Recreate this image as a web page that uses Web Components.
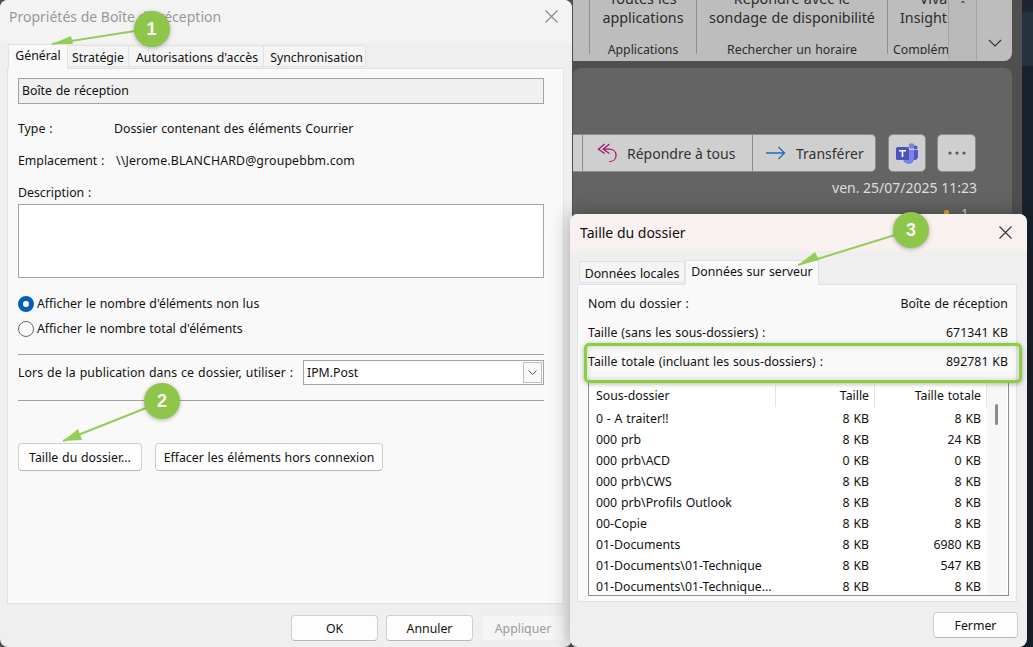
<!DOCTYPE html>
<html lang="fr">
<head>
<meta charset="utf-8">
<title>Propriétés de Boîte de réception</title>
<style>
  html, body { margin: 0; height: 100%; overflow: hidden; background: #4f4f4f; }
  body { font: 12.3px "Noto Sans", "Open Sans", sans-serif; word-spacing: .6px; color: #111; }
</style>
</head>
<body>
<desk-top>
  <mail-backdrop></mail-backdrop>

  <props-dialog></props-dialog>
  <size-dialog></size-dialog>

  <high-light></high-light>
  <call-out n="1" cx="151.500" cy="29" r="18" from="135,31" tip="52,44" h1="71,36" h2="73,44"></call-out>
  <call-out n="2" cx="162" cy="401" r="18" from="146,408" tip="63,441" h1="78,429" h2="82,440"></call-out>
  <call-out n="3" cx="911" cy="230" r="18" from="895,235" tip="798,265" h1="815,252" h2="819,260"></call-out>
</desk-top>

<script>
const FONT = '"Noto Sans", "Open Sans", sans-serif';

class DeskTop extends HTMLElement {
  constructor() {
    super();
    this.attachShadow({ mode: 'open' }).innerHTML = `
      <style>
        :host { display: block; position: relative; width: 1033px; height: 647px; overflow: hidden; background: #4f4f4f; }
      </style>
      <slot></slot>`;
  }
}

class WinButton extends HTMLElement {
  constructor() {
    super();
    this.attachShadow({ mode: 'open' }).innerHTML = `
      <style>
        :host { display: flex; align-items: center; justify-content: center; box-sizing: border-box; height: 26px; flex: none;
          background: #fdfdfd; border: 1px solid #cfcfcf; border-bottom-color: #b8b8b8; border-radius: 4px; color: #111; white-space: nowrap; }
        :host([disabled]) { background: #f5f5f5; border-color: #ededed; color: #9b9b9b; }
      </style>
      <slot></slot>`;
  }
}

class WinTab extends HTMLElement {
  constructor() {
    super();
    this.attachShadow({ mode: 'open' }).innerHTML = `
      <style>
        :host { display: flex; align-items: center; justify-content: center; box-sizing: border-box; height: 22px; padding-top: 2px;
          background: #f4f4f4; border: 1px solid #e2e2e2; border-left: 0; white-space: nowrap; margin-bottom: 1px; }
        :host([active]) { height: 25px; padding-top: 0; padding-bottom: 3px; background: #f9f9f9; border-left: 1px solid #e2e2e2; border-bottom: 0; position: relative; z-index: 1; margin-bottom: -1px; }
      </style>
      <slot></slot>`;
  }
}

class CloseCross extends HTMLElement {
  constructor() {
    super();
    const c = this.getAttribute('color') || '#333';
    this.attachShadow({ mode: 'open' }).innerHTML = `
      <style>:host { display: block; width: 13px; height: 13px; } svg { display: block; }</style>
      <svg width="13" height="13" viewBox="0 0 13 13" fill="none" stroke="${c}" stroke-width="1.1"><path d="M.5.5l12 12M12.500.5l-12 12"/></svg>`;
  }
}

class RibbonGroup extends HTMLElement {
  constructor() {
    super();
    const w = this.getAttribute('w');
    const label = this.getAttribute('label');
    this.attachShadow({ mode: 'open' }).innerHTML = `
      <style>
        :host { display: flex; flex-direction: column; justify-content: flex-end; align-items: center; box-sizing: border-box;
          width: ${w}px; height: 54px; border-right: 1px solid #8f8f8f; line-height: 19px; flex: none; }
        .big { font-size: 14.300px; text-align: center; white-space: nowrap; color: #2c2c2c; }
        .lab { margin-top: 16px; margin-bottom: -3px; height: 14px; line-height: 14px; font-size: 12.300px; color: #2c2c2c; white-space: nowrap; }
      </style>
      <div class="big"><slot></slot></div>
      <div class="lab">${label}</div>`;
  }
}

class MailButton extends HTMLElement {
  constructor() {
    super();
    this.attachShadow({ mode: 'open' }).innerHTML = `
      <style>
        :host { display: flex; align-items: center; height: 100%; box-sizing: border-box; font-size: 14px; word-spacing: 0; color: #333; white-space: nowrap; flex: none; }
      </style>
      <slot></slot>`;
  }
}

class MailBackdrop extends HTMLElement {
  constructor() {
    super();
    this.attachShadow({ mode: 'open' }).innerHTML = `
      <style>
        :host { position: absolute; inset: 0; display: flex; flex-direction: column; padding-left: 573px; padding-right: 21px; box-sizing: border-box; background: #4f4f4f; }
        :host::after { content: ''; position: absolute; right: 0; top: 0; bottom: 0; width: 11px;
          background: linear-gradient(#1e2530 0 12px, #27323f 12px 66px, #18212c 66px); }
        .ribbon { position: relative; height: 61px; display: flex; background: #bdbdbd; border-radius: 0 0 8px 0; overflow: hidden; flex: none; }
        .over { position: relative; width: 29px; border: solid #a5a5a5; border-width: 0 1px; background: #b9b9b9; flex: none; box-sizing: border-box; height: 60px; }
        .over svg { position: absolute; left: 12px; top: 0; }
        .chev { flex: 1; display: flex; align-items: flex-end; justify-content: center; padding-bottom: 14px; }
        .panel { margin-top: 7px; flex: 1; background: #646464; border-radius: 8px 8px 0 0; display: flex; flex-direction: column; padding: 66px 35px 0 0; color: #ddd; word-spacing: 0; }
        .bar { display: flex; height: 38px; }
        .joined { display: flex; width: 303px; background: #cfcfcf; border-radius: 0 5px 5px 0; border: 1px solid #8c8c8c; border-left: 0; box-sizing: border-box; margin-right: 12px; flex: none; }
        .stub { width: 9px; border-right: 1px solid #8c8c8c; }
        .b1 { width: 170px; padding-left: 14px; gap: 9px; border-right: 1px solid #8c8c8c; }
        .b2 { padding-left: 13px; gap: 10px; }
        .square { width: 38px; height: 38px; box-sizing: border-box; background: #cfcfcf; border: 1px solid #8c8c8c; border-radius: 5px; display: flex; align-items: center; justify-content: center; flex: none; }
        .date { text-align: right; margin-top: 6px; font-size: 14px; line-height: 19px; white-space: nowrap; }
        .like { align-self: flex-end; margin-top: 9px; margin-right: 9px; font-size: 12px; line-height: 16px; display: flex; gap: 12px; align-items: flex-start; }
        .thumb-up { width: 5px; height: 6px; margin-top: 4px; background: #e0a72a; border-radius: 2px 2px 0 0; }
        svg { display: block; }
      </style>
      <div class="ribbon">
        <ribbon-group w="17" label="">&nbsp;</ribbon-group>
        <ribbon-group w="107" label="Applications">Toutes les<br>applications</ribbon-group>
        <ribbon-group w="191" label="Rechercher un horaire">Répondre avec le<br>sondage de disponibilité</ribbon-group>
        <ribbon-group style="width:60px;border:0;align-items:flex-start;padding-left:5px;overflow:hidden" w="60" label="Complém">
          <span style="margin-left:20px">Viva</span><br><span style="margin-left:7px">Insights</span>
        </ribbon-group>
        <div class="over"><svg width="4" height="3" viewBox="0 0 4 3" fill="none" stroke="#333"><path d="M.5 3L2 1l1.500 2"/></svg></div>
        <div class="chev"><svg width="14" height="8" viewBox="0 0 14 8" fill="none" stroke="#333" stroke-width="1.1"><path d="M1 1l6 6 6-6"/></svg></div>
      </div>
      <div class="panel">
        <div class="bar">
          <div class="joined">
            <div class="stub"></div>
            <mail-button class="b1">
              <svg width="21" height="20" viewBox="0 0 22 21" fill="none" stroke="#a2156e" stroke-width="1.3"><path d="M8 1L1.500 6.500 8 11M13 1L6.500 6.500 13 11"/><path d="M6.500 6.500H13c4 0 7 2.500 7 6.500s-3 6.500-7 6.500"/></svg>
              <span>Répondre à tous</span>
            </mail-button>
            <mail-button class="b2">
              <svg width="20" height="14" viewBox="0 0 20 14" fill="none" stroke="#1f6fb4" stroke-width="1.3"><path d="M0 7h18.500M12.500 1l6 6-6 6"/></svg>
              <span>Transférer</span>
            </mail-button>
          </div>
          <div class="square">
            <svg width="22" height="22" viewBox="0 0 22 22"><circle cx="15.500" cy="4" r="2.800" fill="#7b83eb"/><circle cx="19.500" cy="5.500" r="2" fill="#5059c9"/><path d="M16 8h6v7a3.500 3.500 0 0 1-6 2z" fill="#5059c9"/><path d="M7 8h11v9a5 5 0 0 1-5.500 5A5.500 5.500 0 0 1 7 17z" fill="#7b83eb"/><rect x="0" y="5" width="13" height="13" rx="1.500" fill="#4b53bc"/><path d="M3 8h7v1.500H7.300V15H5.700V9.500H3z" fill="#fff"/></svg>
          </div>
          <div class="square" style="margin-left:11px;width:39px">
            <svg width="18" height="4" viewBox="0 0 18 4" fill="#555"><circle cx="2" cy="2" r="1.600"/><circle cx="9" cy="2" r="1.600"/><circle cx="16" cy="2" r="1.600"/></svg>
          </div>
        </div>
        <div class="date">ven. 25/07/2025 11:23</div>
        <div class="like"><span class="thumb-up"></span><span>1</span></div>
      </div>`;
  }
}

class PropsDialog extends HTMLElement {
  constructor() {
    super();
    this.attachShadow({ mode: 'open' }).innerHTML = `
      <style>
        :host { position: absolute; left: 0; top: 0; width: 572px; height: 647px; box-sizing: border-box; background: #efefef; border-radius: 8px;
          display: flex; flex-direction: column; font: 12.3px ${FONT}; word-spacing: .6px; color: #111; overflow: hidden; }
        .title { height: 43px; flex: none; display: flex; align-items: flex-start; justify-content: space-between; padding: 6px 14px 0 9px; box-sizing: border-box; background: #f3f3f3; font-size: 14px; word-spacing: 0; line-height: 21px; color: #999; }
        .title close-cross { margin-top: 4px; }
        .tabs { display: flex; align-items: flex-end; height: 25px; padding-left: 8px; flex: none; }
        .pane { box-sizing: border-box; width: 557px; height: 536px; margin-left: 7px; background: #f9f9f9; border: 1px solid #e2e2e2; padding: 9px 19px 0 10px; flex: none; }
        .field { height: 26px; box-sizing: border-box; background: #f0f0f0; border: 1px solid #a3a3a3; display: flex; align-items: center; padding: 0 0 1px 3px; margin-bottom: 8px; }
        .info { display: flex; align-items: center; height: 32px; }
        .info b { font-weight: 400; width: 96px; flex: none; }
        .desc { margin-top: 9px; height: 16px; line-height: 16px; margin-bottom: 3px; }
        .area { height: 74px; box-sizing: border-box; background: #fff; border: 1px solid #a3a3a3; margin-bottom: 13px; }
        .radio { display: flex; align-items: center; gap: 3px; height: 25px; }
        .dot { width: 16px; height: 16px; border-radius: 50%; box-sizing: border-box; border: 1px solid #6b6b6b; background: #fafafa; flex: none; }
        .dot.on { border: 5px solid #0560b2; background: #fff; }
        hr { border: 0; border-top: 1px solid #a0a0a0; margin: 0; }
        .post { display: flex; align-items: center; justify-content: space-between; margin: 5px 0 15px; height: 25px; }
        .select { box-sizing: border-box; width: 241px; height: 25px; background: #fff; border: 1px solid #a3a3a3; display: flex; align-items: center; justify-content: space-between; padding: 1px 1px 1px 3px; }
        .drop { width: 19px; height: 21px; box-sizing: border-box; border: 1px solid #bdbdbd; background: #f8f8f8; display: flex; align-items: center; justify-content: center; }
        .acts { display: flex; gap: 13px; margin-top: 42px; }
        .foot { display: flex; justify-content: flex-end; gap: 8px; margin-top: 11px; padding-right: 7px; }
      </style>
      <div class="title"><span>Propriétés de Boîte de réception</span><close-cross color="#888"></close-cross></div>
      <div class="tabs">
        <win-tab active style="width:60px">Général</win-tab>
        <win-tab style="width:61px">Stratégie</win-tab>
        <win-tab style="width:135px;padding-left:2px">Autorisations d'accès</win-tab>
        <win-tab style="width:102px;padding-left:4px">Synchronisation</win-tab>
      </div>
      <div class="pane">
        <div class="field">Boîte de réception</div>
        <div class="info"><b>Type :</b><span>Dossier contenant des éléments Courrier</span></div>
        <div class="info"><b>Emplacement :</b><span style="margin-left:2px;letter-spacing:.15px">\\\\Jerome.BLANCHARD@groupebbm.com</span></div>
        <div class="desc">Description :</div>
        <div class="area"></div>
        <div class="radio"><span class="dot on"></span>Afficher le nombre d'éléments non lus</div>
        <div class="radio"><span class="dot"></span>Afficher le nombre total d'éléments</div>
        <hr style="margin-top:13px">
        <div class="post">
          <span style="letter-spacing:.08px">Lors de la publication dans ce dossier, utiliser :</span>
          <div class="select"><span>IPM.Post</span><span class="drop"><svg width="9" height="5" viewBox="0 0 9 5" fill="none" stroke="#555"><path d="M.5.500l4 4 4-4"/></svg></span></div>
        </div>
        <hr>
        <div class="acts">
          <win-button style="width:124px;height:28px">Taille du dossier...</win-button>
          <win-button style="width:228px;height:28px">Effacer les éléments hors connexion</win-button>
        </div>
      </div>
      <div class="foot">
        <win-button style="width:87px">OK</win-button>
        <win-button style="width:87px">Annuler</win-button>
        <win-button disabled style="width:84px">Appliquer</win-button>
      </div>`;
  }
}

class SizeDialog extends HTMLElement {
  constructor() {
    super();
    const rows = [
      ['0 - A traiter!!', '8 KB', '8 KB'],
      ['000 prb', '8 KB', '24 KB'],
      ['000 prb\\ACD', '0 KB', '0 KB'],
      ['000 prb\\CWS', '8 KB', '8 KB'],
      ['000 prb\\Profils Outlook', '8 KB', '8 KB'],
      ['00-Copie', '8 KB', '8 KB'],
      ['01-Documents', '8 KB', '6980 KB'],
      ['01-Documents\\01-Technique', '8 KB', '547 KB'],
      ['01-Documents\\01-Technique...', '8 KB', '8 KB'],
    ];
    const body = rows.map(r => `<div class="row"><span>${r[0]}</span><span class="num">${r[1]}</span><span class="num">${r[2]}</span></div>`).join('');
    this.attachShadow({ mode: 'open' }).innerHTML = `
      <style>
        :host { position: absolute; left: 570px; top: 214px; width: 457px; height: 433px; box-sizing: border-box; background: #efefef; border-radius: 8px;
          display: flex; flex-direction: column; font: 12.3px ${FONT}; word-spacing: .6px; color: #111; box-shadow: 0 0 20px rgba(0,0,0,.32); }
        .title { height: 37px; flex: none; box-sizing: border-box; display: flex; align-items: center; justify-content: space-between; padding: 0 15px 0 10px; background: #f9f0f0; border-radius: 8px 8px 0 0; font-size: 14px; word-spacing: 0; }
        .tabs { display: flex; align-items: flex-end; height: 33px; padding-left: 9px; flex: none; box-sizing: border-box; }
        .tabs win-tab:first-child { border-left: 1px solid #e2e2e2; }
        .pane { box-sizing: border-box; width: 440px; height: 318px; margin-left: 7px; background: #f9f9f9; border: 1px solid #e2e2e2; padding: 4px 8px 0 10px; flex: none; }
        .line { display: flex; justify-content: space-between; align-items: center; height: 29px; letter-spacing: .04px; }
        .list { margin-top: 4px; margin-right: -1px; box-sizing: border-box; height: 216px; background: #fff; border: 1px solid #8b8d99; padding-top: 4px; position: relative; overflow: hidden; }
        .head, .row { display: grid; grid-template-columns: 179px 99px 113px; align-items: center; padding-left: 7px; white-space: nowrap; }
        .head { height: 23px; align-items: start; }
        .row { height: 21px; }
        .head span { box-sizing: border-box; height: 22px; line-height: 21px; }
        .head span + span { border-left: 1px solid #e4e4e4; }
        .head span:last-child { border-right: 1px solid #e4e4e4; }
        .num { text-align: right; padding-right: 5px; }
        .row .num:last-child { padding-right: 6px; }
        .track { position: absolute; right: 1px; top: 0; bottom: 0; width: 20px; background: #f7f7f7; }
        .thumb { position: absolute; left: 8px; top: 23px; width: 3px; height: 21px; background: #8b8b8b; border-radius: 2px; }
        .foot { display: flex; justify-content: flex-end; margin-top: 10px; padding-right: 9px; }
      </style>
      <div class="title"><span>Taille du dossier</span><close-cross></close-cross></div>
      <div class="tabs">
        <win-tab style="width:106px">Données locales</win-tab>
        <win-tab active style="width:134px">Données sur serveur</win-tab>
      </div>
      <div class="pane">
        <div class="line"><span>Nom du dossier :</span><span>Boîte de réception</span></div>
        <div class="line"><span>Taille (sans les sous-dossiers) :</span><span>671341 KB</span></div>
        <div class="line"><span>Taille totale (incluant les sous-dossiers) :</span><span>892781 KB</span></div>
        <div class="list">
          <div class="track"><div class="thumb"></div></div>
          <div class="head"><span>Sous-dossier</span><span class="num">Taille</span><span class="num">Taille totale</span></div>
          ${body}
        </div>
      </div>
      <div class="foot"><win-button style="width:85px">Fermer</win-button></div>`;
  }
}

// cadre vert de la ligne "Taille totale"
class HighLight extends HTMLElement {
  constructor() {
    super();
    this.attachShadow({ mode: 'open' }).innerHTML = `
      <style>
        :host { position: absolute; left: 584px; top: 343px; width: 438px; height: 40px; box-sizing: border-box; border: 3px solid #8ccf3c; border-radius: 5px;
          box-shadow: 0 1px 5px rgba(0,0,0,.3), inset 0 0 6px rgba(0,0,0,.18); z-index: 4; }
      </style>`;
  }
}

// badge numéroté + flèche, posés par-dessus les fenêtres
class CallOut extends HTMLElement {
  constructor() {
    super();
    const cx = +this.getAttribute('cx');
    const cy = +this.getAttribute('cy');
    const r = +this.getAttribute('r');
    const from = this.getAttribute('from').split(',');
    const tip = this.getAttribute('tip').split(',');
    const h1 = this.getAttribute('h1');
    const h2 = this.getAttribute('h2');
    this.attachShadow({ mode: 'open' }).innerHTML = `
      <style>
        :host { position: absolute; inset: 0; display: block; pointer-events: none; z-index: 5; }
        svg { position: absolute; inset: 0; }
        .n { position: absolute; left: ${cx - r}px; top: ${cy - r}px; width: ${r * 2}px; height: ${r * 2}px; border-radius: 50%;
          background: #8ec64c; box-shadow: 0 1px 4px rgba(0,0,0,.3); display: flex; align-items: center; justify-content: center;
          font: 700 18px "Liberation Sans", sans-serif; color: #f6faee; }
      </style>
      <svg width="1033" height="647" viewBox="0 0 1033 647">
        <line x1="${from[0]}" y1="${from[1]}" x2="${tip[0]}" y2="${tip[1]}" stroke="#96cc58" stroke-width="2"/>
        <polygon points="${tip.join(',')} ${h1} ${h2}" fill="#96cc58"/>
      </svg>
      <div class="n">${this.getAttribute('n')}</div>`;
  }
}

customElements.define('close-cross', CloseCross);
customElements.define('win-button', WinButton);
customElements.define('win-tab', WinTab);
customElements.define('ribbon-group', RibbonGroup);
customElements.define('mail-button', MailButton);
customElements.define('mail-backdrop', MailBackdrop);
customElements.define('props-dialog', PropsDialog);
customElements.define('size-dialog', SizeDialog);
customElements.define('high-light', HighLight);
customElements.define('call-out', CallOut);
customElements.define('desk-top', DeskTop);
</script>
</body>
</html>
